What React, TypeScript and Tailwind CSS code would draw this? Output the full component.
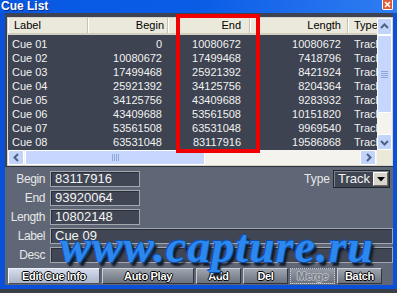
const cues = [
  ["Cue 01", "0", "10080672", "10080672"],
  ["Cue 02", "10080672", "17499468", "7418796"],
  ["Cue 03", "17499468", "25921392", "8421924"],
  ["Cue 04", "25921392", "34125756", "8204364"],
  ["Cue 05", "34125756", "43409688", "9283932"],
  ["Cue 06", "43409688", "53561508", "10151820"],
  ["Cue 07", "53561508", "63531048", "9969540"],
  ["Cue 08", "63531048", "83117916", "19586868"],
];

const chevrons = {
  up: "M2 7 L5.5 3.5 L9 7",
  down: "M2 4 L5.5 7.5 L9 4",
  left: "M7 2 L3.5 5.5 L7 9",
  right: "M4 2 L7.5 5.5 L4 9",
};

function ScrollButton({ dir, className }: { dir: keyof typeof chevrons; className: string }) {
  return (
    <div className={`flex items-center justify-center rounded-[2px] border border-white bg-[#c3d4fb] ${className}`}>
      <svg width="11" height="11" viewBox="0 0 11 11">
        <path d={chevrons[dir]} fill="none" stroke="#4d6185" strokeWidth="2" />
      </svg>
    </div>
  );
}

function Grip({ vertical }: { vertical?: boolean }) {
  return (
    <div className={`flex gap-[1px] ${vertical ? "flex-col" : ""}`}>
      {[0, 1, 2, 3].map((i) => (
        <div key={i} className={vertical ? "h-[1px] w-[7px] bg-[#8ea6dc]" : "h-[7px] w-[1px] bg-[#8ea6dc]"} />
      ))}
    </div>
  );
}

const outline = "[text-shadow:1px_0_0_#000,-1px_0_0_#000,0_1px_0_#000,0_-1px_0_#000]";

function Field({ label, value, className }: { label: string; value: string; className: string }) {
  return (
    <div className="flex h-[16px] items-center">
      <span className="w-[40px] text-right text-[12px] leading-[16px] tracking-[-0.4px] text-[#e8e8e8]">{label}</span>
      <div
        className={`ml-[5px] h-[16px] border border-[#a3a7af] bg-[#404653] pl-[4px] text-[13px] leading-[14px] text-[#f4f4f4] shadow-[inset_1px_1px_0_#2a2e36] ${className}`}
      >
        {value}
      </div>
    </div>
  );
}

export default function App() {
  return (
    <div className="relative h-[293px] w-[397px] overflow-hidden bg-[#3a3e46] font-['Liberation_Sans',Arial,sans-serif]">
      <div className="flex h-[289px] w-[397px] flex-col bg-[#0a50d8]">
        {/* Title bar */}
        <div className="flex h-[13px] items-start justify-between bg-gradient-to-r from-[#0858e2] via-[#0a5ce6] to-[#2f7df2]">
          <span className="ml-[1px] text-[12px] font-bold leading-[12px] text-white [text-shadow:1px_1px_0_#0a2a8a]">
            Cue List
          </span>
          <div className="mr-[4px] flex h-[10px] w-[11px] items-center justify-center rounded-b-[2px] border border-t-0 border-white bg-[#e15a33]">
            <svg width="7" height="7" viewBox="0 0 7 7">
              <path d="M1 1 L6 6 M6 1 L1 6" stroke="#fff" strokeWidth="1.6" />
            </svg>
          </div>
        </div>

        <div className="flex flex-1 pb-[4px] pl-[5px] pr-[4px]">
          <div className="flex flex-1 flex-col">
            {/* List panel */}
            <div className="h-[153px] bg-[#3d4350] pl-[2px] pt-[4px]">
              <div className="flex h-[149px] border border-[#d6d3ca]">
                <div className="flex w-[369px] flex-col">
                  {/* Header */}
                  <div className="flex h-[17px] border-b-2 border-[#d3cfbf] bg-[#ebe9db] text-[11px] leading-[15px] text-black">
                    <div className="w-[80px] border-r border-[#c5c2b2] pl-[6px] shadow-[inset_1px_0_0_#fff]">Label</div>
                    <div className="w-[80px] border-r border-[#c5c2b2] pr-[3px] text-right shadow-[inset_1px_0_0_#fff]">Begin</div>
                    <div className="w-[82px] border-r border-[#c5c2b2] pr-[8px] text-right shadow-[inset_1px_0_0_#fff]">End</div>
                    <div className="w-[98px] border-r border-[#c5c2b2] pr-[6px] text-right shadow-[inset_1px_0_0_#fff]">Length</div>
                    <div className="flex-1 overflow-hidden whitespace-nowrap pl-[6px] shadow-[inset_1px_0_0_#fff]">Type</div>
                  </div>

                  {/* Rows */}
                  <div className="h-[115px] overflow-hidden pt-[2px] text-[11px] leading-[14px] text-[#f2f2f2]">
                    {cues.map(([label, begin, end, length]) => (
                      <div key={label} className="flex h-[14px]">
                        <div className="w-[80px] pl-[4px]">{label}</div>
                        <div className="w-[80px] pr-[6px] text-right">{begin}</div>
                        <div className="w-[82px] pr-[9px] text-right">{end}</div>
                        <div className="w-[98px] pr-[7px] text-right">{length}</div>
                        <div className="flex-1 overflow-hidden whitespace-nowrap pl-[6px]">Track</div>
                      </div>
                    ))}
                  </div>

                  {/* Horizontal scrollbar */}
                  <div className="flex h-[15px] bg-[#f4f3ee]">
                    <ScrollButton dir="left" className="w-[16px]" />
                    <div className="ml-[1px] flex w-[180px] items-center justify-center rounded-[2px] border border-white bg-[#c6d6fc]">
                      <Grip />
                    </div>
                    <div className="flex-1" />
                    <ScrollButton dir="right" className="w-[16px]" />
                    <div className="w-[1px]" />
                  </div>
                </div>

                {/* Vertical scrollbar */}
                <div className="flex w-[15px] flex-col bg-[#f4f3ee]">
                  <ScrollButton dir="up" className="h-[17px]" />
                  <div className="flex h-[78px] items-center justify-center rounded-[2px] border border-white bg-[#c6d6fc]">
                    <Grip vertical />
                  </div>
                  <div className="flex-1" />
                  <ScrollButton dir="down" className="h-[16px]" />
                  <div className="h-[15px] bg-[#ece9d8]" />
                </div>
              </div>
            </div>

            {/* Form panel */}
            <div className="flex flex-1 flex-col border-t border-[#2f333b] bg-[#5f6675] pt-[4px]">
              <div className="flex flex-col gap-[3px]">
                <div className="flex items-center justify-between">
                  <Field label="Begin" value="83117916" className="w-[90px]" />
                  <div className="mr-[3px] flex items-center">
                    <span className="mr-[3px] text-[12px] leading-[16px] text-[#e8e8e8]">Type</span>
                    <div className="-my-[1px] flex h-[18px] w-[57px] items-center border border-[#22262d] bg-[#404653] shadow-[inset_1px_1px_0_#7c828c]">
                      <span className="flex-1 pl-[4px] text-[13px] leading-[16px] text-[#f4f4f4]">Track</span>
                      <div className="mr-[1px] flex h-[14px] w-[15px] items-center justify-center border border-t-white border-l-white border-b-[#6d6a60] border-r-[#6d6a60] bg-[#d8d5cc]">
                        <svg width="8" height="5" viewBox="0 0 8 5">
                          <path d="M0 0 H8 L4 4.5 Z" fill="#000" />
                        </svg>
                      </div>
                    </div>
                  </div>
                </div>
                <Field label="End" value="93920064" className="w-[90px]" />
                <Field label="Length" value="10802148" className="w-[90px]" />
                <Field label="Label" value="Cue 09" className="flex-1" />
                <Field label="Desc" value="" className="flex-1" />
              </div>

              {/* Buttons */}
              <div className="mt-[5px] flex gap-[2px] pl-[3px] text-[11px] font-bold tracking-[-0.3px] text-white">
                <div className={`flex h-[16px] w-[92px] items-center justify-center border border-t-[#eef2fa] border-l-[#eef2fa] border-b-[#4a505a] border-r-[#4a505a] bg-gradient-to-b from-[#d6dded] to-[#a9b4c8] ${outline}`}>
                  Edit Cue Info
                </div>
                <div className={`flex h-[16px] w-[92px] items-center justify-center border border-t-[#c9cdd5] border-l-[#c9cdd5] border-b-[#30343c] border-r-[#30343c] bg-gradient-to-b from-[#a0a6b0] to-[#6c727d] ${outline}`}>
                  Auto Play
                </div>
                <div className={`flex h-[16px] w-[45px] items-center justify-center border border-t-[#c9cdd5] border-l-[#c9cdd5] border-b-[#30343c] border-r-[#30343c] bg-gradient-to-b from-[#a0a6b0] to-[#6c727d] ${outline}`}>
                  Add
                </div>
                <div className={`flex h-[16px] w-[45px] items-center justify-center border border-t-[#c9cdd5] border-l-[#c9cdd5] border-b-[#30343c] border-r-[#30343c] bg-gradient-to-b from-[#a0a6b0] to-[#6c727d] ${outline}`}>
                  Del
                </div>
                <div className="flex h-[16px] w-[45px] items-center justify-center border border-dotted border-[#c9cdd5] bg-gradient-to-b from-[#959ba5] to-[#6c727d] text-[#767c86] [text-shadow:1px_0_0_#b8bcc4,-1px_0_0_#b8bcc4,0_1px_0_#b8bcc4,0_-1px_0_#b8bcc4]">
                  Merge
                </div>
                <div className={`flex h-[16px] w-[45px] items-center justify-center border border-t-[#c9cdd5] border-l-[#c9cdd5] border-b-[#30343c] border-r-[#30343c] bg-gradient-to-b from-[#a0a6b0] to-[#6c727d] ${outline}`}>
                  Batch
                </div>
              </div>
            </div>
          </div>
        </div>
      </div>

      {/* Red highlight around the End column */}
      <div className="absolute left-[176px] top-[14px] h-[139px] w-[84px] border-4 border-[#f00000]" />

      {/* Watermark */}
      <div className="pointer-events-none absolute left-[60px] top-[223px] whitespace-nowrap font-['Liberation_Serif',serif] text-[46px] font-bold italic leading-[47px] tracking-[1px] text-[#2c88ee] [text-shadow:-1px_-1px_0_#0b4fb0,1px_1px_0_#0b4fb0,3px_4px_2px_#121a2a]">
        www.capture.ru
      </div>
    </div>
  );
}
